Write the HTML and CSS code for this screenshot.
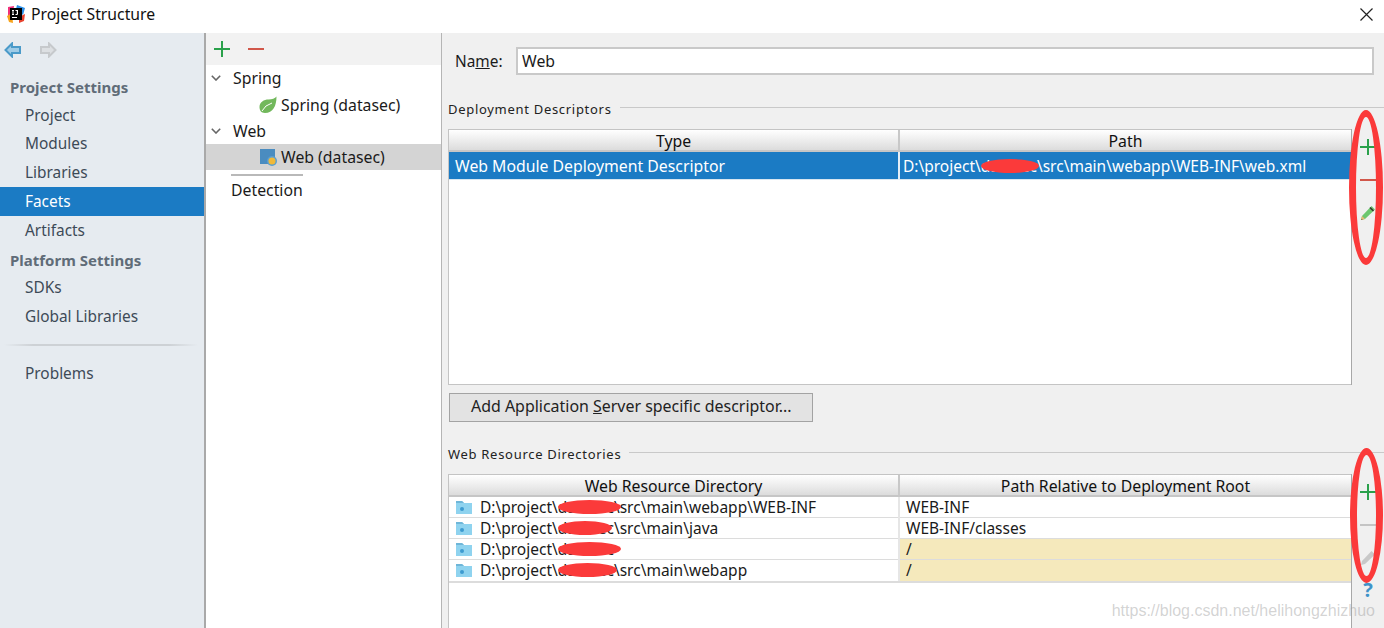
FILE: index.html
```html
<!DOCTYPE html>
<html lang="en">
<head>
<meta charset="utf-8">
<title>Project Structure</title>
<link rel="stylesheet" href="styles.css">
</head>
<body>
<div class="window">
  <header class="titlebar">
    <svg class="app-icon" width="18" height="18" viewBox="0 0 18 18">
      <path d="M1 2 L7 1 L6 9 L1 13Z" fill="#f0327a"/>
      <path d="M10 0 L18 3 L16 10 L9 4Z" fill="#2b8fe8"/>
      <path d="M0 11 L5 8 L6 18 L2 17Z" fill="#f7a31c"/>
      <path d="M12 12 L18 9 L17 16 L12 18Z" fill="#e8432f"/>
      <rect x="3" y="3" width="12" height="12" fill="#000"/>
      <rect x="5" y="12" width="5" height="1" fill="#fff"/>
      <path d="M5 5h2v1h-.5v3H7v1H5V9h.5V6H5zM8.500 5H11v4q0 1-1.200 1H8.500V9h1.300V5.900H8.500z" fill="#fff"/>
    </svg>
    <span class="title-text">Project Structure</span>
    <svg class="close" width="13" height="13" viewBox="0 0 13 13"><path d="M.5.500l12 12M12.500.500l-12 12" stroke="#222" stroke-width="1.200" fill="none"/></svg>
  </header>
  <div class="body">
    <nav class="sidebar">
      <div class="nav-arrows">
        <svg width="18" height="16" viewBox="0 0 18 16"><path d="M8 1.500L1.500 8 8 14.500V11h8V5H8z" fill="#9fcbe6" stroke="#4a9ac9" stroke-width="2"/></svg>
        <svg width="18" height="16" viewBox="0 0 18 16"><path d="M10 1.500L16.500 8 10 14.500V11H2V5h8z" fill="#dcdfe2" stroke="#c6c9cc" stroke-width="2"/></svg>
      </div>
      <div class="nav-head first">Project Settings</div>
      <div class="nav-item short">Project</div>
      <div class="nav-item">Modules</div>
      <div class="nav-item">Libraries</div>
      <div class="nav-item selected">Facets</div>
      <div class="nav-item">Artifacts</div>
      <div class="nav-head platform">Platform Settings</div>
      <div class="nav-item">SDKs</div>
      <div class="nav-item">Global Libraries</div>
      <div class="nav-sep"></div>
      <div class="nav-item">Problems</div>
    </nav>
    <section class="tree-pane">
      <div class="tree-toolbar">
        <svg class="tool" width="16" height="16" viewBox="0 0 16 16"><path d="M8 0v16M0 8h16" stroke="#2aa14b" stroke-width="2"/></svg>
        <svg class="tool" width="16" height="16" viewBox="0 0 16 16"><path d="M0 8h16" stroke="#d1574a" stroke-width="2"/></svg>
      </div>
      <div class="tree-row top-row">
        <svg class="chev" width="10" height="6" viewBox="0 0 10 6"><path d="M.8.800L5 5 9.200.800" stroke="#666" stroke-width="1.600" fill="none"/></svg>
        <span>Spring</span>
      </div>
      <div class="tree-row child">
        <svg width="18" height="18" viewBox="0 0 18 18"><path d="M17.500.5C17.500 10 14 17 6 17 2 17 .5 14 .5 11 .5 6 5 3.500 9.500 3.500 13 3.500 16 2.500 17.500.5z" fill="#72b85c"/><path d="M3 15q3-6 10-8" stroke="#fff" fill="none"/></svg>
        <span>Spring (datasec)</span>
      </div>
      <div class="tree-row">
        <svg class="chev" width="10" height="6" viewBox="0 0 10 6"><path d="M.8.800L5 5 9.200.800" stroke="#666" stroke-width="1.600" fill="none"/></svg>
        <span>Web</span>
      </div>
      <div class="tree-row child active">
        <svg width="18" height="18" viewBox="0 0 18 18"><rect x="1" y="1" width="15" height="15" fill="#4a8cc0"/><circle cx="13" cy="13" r="5" fill="#5a9fd0"/><circle cx="13" cy="13" r="3.500" fill="#f0b93a"/></svg>
        <span>Web (datasec)</span>
      </div>
      <div class="detect-rule"></div>
      <div class="detection">Detection</div>
    </section>
    <main class="details">
      <div class="name-row">
        <label class="name-label" for="facet-name">Na<u>m</u>e:</label>
        <input id="facet-name" class="name-input" value="Web">
      </div>
      <div class="group-title first-group"><span>Deployment Descriptors</span><i></i></div>
      <div class="table-wrap upper">
        <div class="table-box">
          <table>
            <thead><tr><th>Type</th><th>Path</th></tr></thead>
            <tbody>
              <tr class="row-selected">
                <td>Web Module Deployment Descriptor</td>
                <td class="path-cell">D:\project\<span class="redact r-top">datasec</span>\src\main\webapp\WEB-INF\web.xml</td>
              </tr>
            </tbody>
          </table>
        </div>
        <div class="side-tools">
          <svg class="s-plus" width="16" height="16" viewBox="0 0 16 16"><path d="M8 0v16M0 8h16" stroke="#2aa14b" stroke-width="2"/></svg>
          <svg class="s-minus" width="16" height="16" viewBox="0 0 16 16"><path d="M0 8h16" stroke="#d1574a" stroke-width="2"/></svg>
          <svg class="s-pencil" width="16" height="16" viewBox="0 0 16 16"><path d="M11.500 1L15 4.500 5 14 1 15 2 11z" fill="#6cc76f"/><path d="M10 2.500l3.500 3.500" stroke="#333" stroke-width="1.500"/><path d="M2 11l3 3-4 1z" fill="#eab676"/><path d="M1 15l1-1 .5.500z" fill="#222"/></svg>
          <span class="marker m-upper"></span>
        </div>
      </div>
      <button class="server-btn" type="button">Add Application <u>S</u>erver specific descriptor...</button>
      <div class="group-title second-group"><span>Web Resource Directories</span><i></i></div>
      <div class="table-wrap lower">
        <div class="table-box">
          <table>
            <thead><tr><th>Web Resource Directory</th><th>Path Relative to Deployment Root</th></tr></thead>
            <tbody class="res-body">
              <tr>
                <td><span class="cell-flex"><svg class="folder" width="18" height="15" viewBox="0 0 18 15"><use href="#folder-shape"/></svg><span>D:\project\<span class="redact r-a">datasec</span>\src\main\webapp\WEB-INF</span></span></td>
                <td class="rel">WEB-INF</td>
              </tr>
              <tr>
                <td><span class="cell-flex"><svg class="folder" width="18" height="15" viewBox="0 0 18 15"><use href="#folder-shape"/></svg><span>D:\project\<span class="redact r-b">datasec</span>\src\main\java</span></span></td>
                <td class="rel">WEB-INF/classes</td>
              </tr>
              <tr class="warn">
                <td><span class="cell-flex"><svg class="folder" width="18" height="15" viewBox="0 0 18 15"><use href="#folder-shape"/></svg><span>D:\project\<span class="redact r-a">datasec</span></span></span></td>
                <td class="rel">/</td>
              </tr>
              <tr class="warn">
                <td><span class="cell-flex"><svg class="folder" width="18" height="15" viewBox="0 0 18 15"><use href="#folder-shape"/></svg><span>D:\project\<span class="redact r-c">datasec</span>\src\main\webapp</span></span></td>
                <td class="rel">/</td>
              </tr>
            </tbody>
          </table>
        </div>
        <div class="side-tools">
          <svg class="s-plus" width="16" height="16" viewBox="0 0 16 16"><path d="M8 0v16M0 8h16" stroke="#2aa14b" stroke-width="2"/></svg>
          <svg class="s-minus" width="16" height="16" viewBox="0 0 16 16"><path d="M0 8h16" stroke="#c4c4c4" stroke-width="2"/></svg>
          <svg class="s-pencil" width="16" height="16" viewBox="0 0 16 16"><path d="M11.500 1L15 4.500 5 14 1 15 2 11z" fill="#c8c8c8"/></svg>
          <span class="help">?</span>
          <span class="marker m-lower"></span>
        </div>
      </div>
      <div class="watermark">https://blog.csdn.net/helihongzhizhuo</div>
    </main>
  </div>
</div>
<svg class="defs" width="0" height="0">
  <symbol id="folder-shape" viewBox="0 0 18 15">
    <path d="M1 1h6l2 2h8v11H1z" fill="#8fd3ef"/>
    <path d="M1 1h6l2 2H1z" fill="#6fb6d8"/>
    <circle cx="7" cy="9" r="2" fill="#3d9bd0"/>
  </symbol>
</svg>
</body>
</html>
```
FILE: styles.css
```css
* { box-sizing: border-box; }
html, body { margin: 0; height: 100%; overflow: hidden; }
body { font-family: "Noto Sans", "Open Sans", sans-serif; font-size: 15.8px; color: #1a1a1a; }
.window { width: 1384px; height: 628px; display: flex; flex-direction: column; background: #fff; }

.titlebar { height: 33px; flex: none; display: flex; align-items: center; padding: 0 11px 5px 7px; background: #fff; }
.app-icon { flex: none; }
.title-text { margin-left: 6px; font-size: 15.75px; color: #111; }
.close { margin-left: auto; }

.body { flex: 1; display: flex; min-height: 0; }

.sidebar { width: 206px; flex: none; background: #e6ebf0; border-right: 2px solid #a9a9a9; color: #3d4a57; font-size: 15.4px; }
.nav-arrows { height: 34px; padding: 9px 0 0 4px; display: flex; gap: 17px; }
.nav-head { height: 27px; line-height: 27px; padding-left: 10px; font-weight: 700; color: #606c78; font-size: 15px; margin-top: 1px; }
.nav-head.first { margin-top: 7px; }
.nav-head.platform { margin-top: 3px; height: 25px; line-height: 25px; }
.nav-item { height: 29px; line-height: 29px; padding-left: 25px; }
.nav-item.short { height: 28px; line-height: 30px; }
.nav-item.selected { background: #1b7bc4; color: #fff; }
.nav-sep { height: 2px; margin: 13px 6px 13px 4px; background: linear-gradient(90deg, #e6ebf0, #cdd1d5 15%, #cdd1d5 85%, #e6ebf0); }

.tree-pane { width: 236px; flex: none; border-right: 1px solid #b5b5b5; background: #fff; }
.tree-toolbar { height: 32px; background: #f2f2f2; display: flex; align-items: center; padding-left: 8px; gap: 18px; }
.tree-row { height: 26px; display: flex; align-items: center; padding-left: 5px; gap: 12px; }
.tree-row .chev { flex: none; }
.tree-row.child { padding-left: 53px; gap: 4px; }
.tree-row.child svg { flex: none; }
.tree-row.active { background: #d4d4d4; }
.tree-row.top-row { margin-top: 1px; padding-bottom: 2px; }
.detect-rule { height: 2px; width: 72px; background: #b9b9b9; margin: 4px 0 0 25px; }
.detection { margin: 1px 0 0 25px; line-height: 26px; }

.details { flex: 1; min-width: 0; background: #f0f0f0; position: relative; padding-left: 6px; }
.name-row { display: flex; align-items: center; height: 28px; margin-top: 14px; padding-left: 7px; }
.name-label { width: 61px; flex: none; font-size: 15.4px; }
.name-input { width: 858px; height: 28px; border: 2px solid #c9c9c9; background: #fff; padding: 0 4px; font: inherit; color: #1a1a1a; outline: none; }

.group-title { display: flex; align-items: center; font-size: 13px; letter-spacing: .7px; color: #222; height: 20px; }
.group-title span { flex: none; }
.group-title i { flex: 1; height: 1px; background: #c9c9c9; margin: 0 0 4px 8px; }
.first-group { margin-top: 24px; }
.second-group { margin-top: 22px; }

.table-wrap { display: flex; }
.table-wrap.upper { margin-top: 10px; height: 256px; }
.table-wrap.lower { margin-top: 10px; height: 154px; }
.table-box { width: 903px; flex: none; background: #fff; border: 1px solid #c4c4c4; border-right: 0; height: 100%; }
.table-wrap.lower .table-box { border-bottom: 0; }
table { width: 902px; table-layout: fixed; border-collapse: collapse; }
th { height: 21px; padding: 2px 0 0; font-weight: 400; font-size: 15.8px; line-height: 18px; color: #111; background: linear-gradient(#ffffff, #dcdcdc); border-bottom: 2px solid #c6c6c6; }
th:first-child { width: 450px; border-right: 2px solid #c8c8c8; }
td { padding: 0; white-space: nowrap; overflow: hidden; }
.row-selected td { height: 28px; background: #1b7bc4; color: #fff; padding: 1px 0 0 6px; border-bottom: 1px solid #d8e6f0; }
.row-selected td:first-child { border-right: 2px solid #e4eef6; }
.row-selected .path-cell { padding-left: 3px; font-size: 15.5px; }
.res-body td { height: 21px; line-height: 20px; border-bottom: 1px solid #dcdcdc; font-size: 15.5px; }
.res-body tr:last-child td { border-bottom-width: 2px; height: 22px; }
.res-body td:first-child { padding-left: 6px; border-right: 2px solid #e6e6e6; }
.res-body .rel { padding-left: 6px; }
.res-body .warn td { padding-top: 1px; line-height: 19px; }
.res-body .warn .rel { background: #f5e9bc; }
.cell-flex { display: flex; align-items: center; gap: 7px; }
.folder { flex: none; }

.redact { position: relative; }
.redact::after { content: ""; position: absolute; top: 4px; bottom: 4px; background: #fb3a3a; border-radius: 50%; }
.r-top::after { left: 0; right: -2px; }
.r-a::after { left: 0; right: -7px; }
.r-b::after { left: 0; right: 2px; }
.r-c::after { left: 0; right: -3px; }

.side-tools { flex: 1; position: relative; border-left: 1px solid #a8a8a8; display: flex; flex-direction: column; align-items: center; padding-top: 10px; gap: 17px; height: 100%; }
.help { color: #3f93c9; font-weight: 700; font-size: 20px; line-height: 18px; margin-top: -2px; }
.marker { position: absolute; border: 7px solid #fb3a3a; border-radius: 50%; }
.m-upper { left: -3px; width: 34px; top: -19px; height: 155px; }
.m-lower { left: -2px; width: 33px; top: -26px; height: 135px; }

.watermark { position: absolute; right: 9px; bottom: 8px; color: rgba(150,150,150,.42); font-family: "Liberation Sans", sans-serif; font-size: 16px; }

.server-btn { display: block; width: 364px; height: 29px; margin: 8px 0 0 1px; padding: 0 0 3px 21px; text-align: left; font: inherit; font-size: 15.95px; color: #222; border: 1px solid #a3a3a3; background: #e3e3e3; }
.defs { position: absolute; }
```
